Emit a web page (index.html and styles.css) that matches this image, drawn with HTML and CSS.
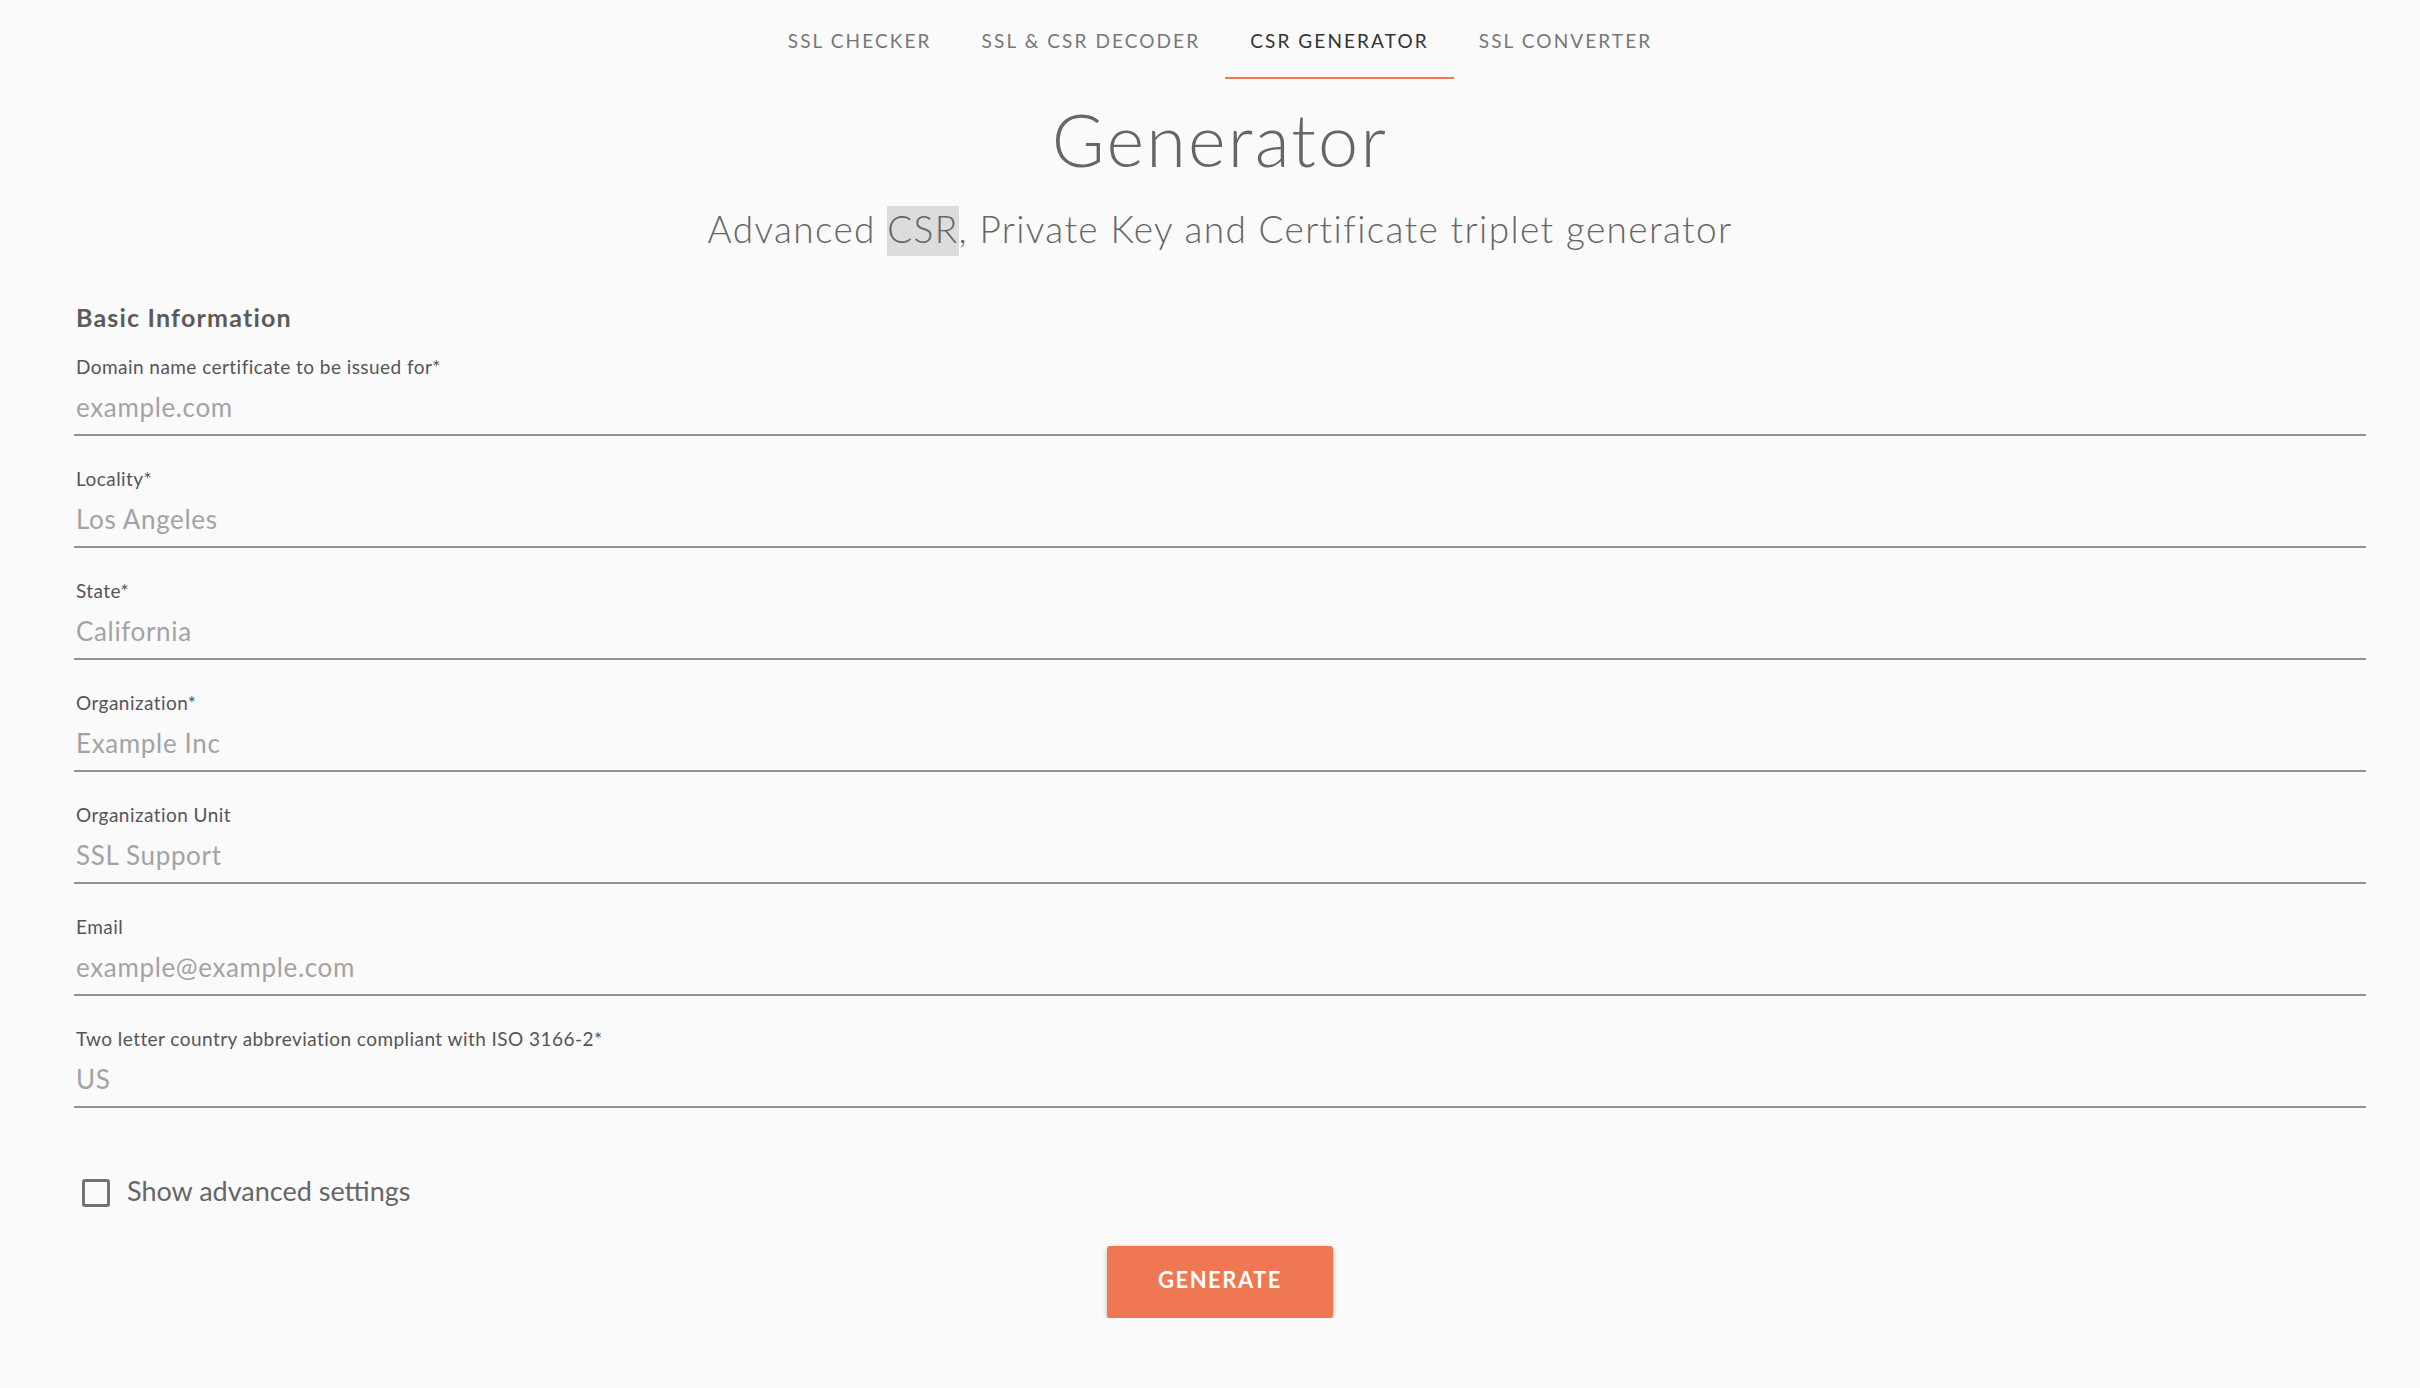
FILE: index.html
```html
<!DOCTYPE html>
<html lang="en">
<head>
<meta charset="utf-8">
<title>CSR Generator</title>
<link rel="stylesheet" href="styles.css">
</head>
<body>
<div class="page">
  <nav class="tabs">
    <a class="tab" href="#">SSL CHECKER</a>
    <a class="tab" href="#">SSL &amp; CSR DECODER</a>
    <a class="tab active" href="#">CSR GENERATOR</a>
    <a class="tab" href="#">SSL CONVERTER</a>
  </nav>
  <h1 class="title">Generator</h1>
  <p class="subtitle">Advanced <span class="hl">CSR</span>, Private Key and Certificate triplet generator</p>
  <form class="form">
    <h2 class="section">Basic Information</h2>
    <label class="field"><span class="label">Domain name certificate to be issued for*</span><input class="input" type="text" placeholder="example.com"></label>
    <label class="field"><span class="label">Locality*</span><input class="input" type="text" placeholder="Los Angeles"></label>
    <label class="field"><span class="label">State*</span><input class="input" type="text" placeholder="California"></label>
    <label class="field"><span class="label">Organization*</span><input class="input" type="text" placeholder="Example Inc"></label>
    <label class="field"><span class="label">Organization Unit</span><input class="input" type="text" placeholder="SSL Support"></label>
    <label class="field"><span class="label">Email</span><input class="input" type="text" placeholder="example@example.com"></label>
    <label class="field"><span class="label">Two letter country abbreviation compliant with ISO 3166-2*</span><input class="input" type="text" placeholder="US"></label>
    <label class="check"><span class="box"></span><span class="check-text">Show advanced settings</span></label>
    <div class="actions"><button class="btn" type="button">GENERATE</button></div>
  </form>
</div>
</body>
</html>
```

FILE: styles.css
```css
* { box-sizing: border-box; }
html, body { margin: 0; padding: 0; background: #fafafa; }
body { font-family: "Lato", "Open Sans", sans-serif; color: #666; }

.page {
  padding: 0 54px 0 74px;
  display: flex;
  flex-direction: column;
}

.tabs {
  display: flex;
  justify-content: center;
  padding-top: 29px;
}
.tab {
  display: block;
  padding: 0 25px 24px;
  font-size: 19px;
  line-height: 24px;
  color: #777;
  text-decoration: none;
  border-bottom: 2px solid transparent;
  letter-spacing: 2.1px;
}
.tab.active { color: #333; border-bottom-color: #ef7752; }

.title {
  margin: 15px 0 0;
  text-align: center;
  font-weight: 300;
  font-size: 72px;
  line-height: 90px;
  letter-spacing: 2.2px;
  color: #666;
}
.subtitle {
  margin: 20px 0 0;
  text-align: center;
  font-weight: 300;
  font-size: 37px;
  line-height: 50px;
  letter-spacing: 1.35px;
  color: #666;
}
.hl { background: #dcdcdc; padding-bottom: 5px; }

.form { display: flex; flex-direction: column; margin-top: 48px; }
.section {
  margin: 0 0 23px 2px;
  font-size: 25px;
  line-height: 30px;
  font-weight: 700;
  letter-spacing: 1.2px;
  color: #5a5a5a;
}
.field { display: flex; flex-direction: column; margin-bottom: 31px; }
.label { font-size: 19px; line-height: 24px; color: #555; margin: 0 0 10px 2px; letter-spacing: 0.45px; }
.input {
  font-family: inherit;
  font-size: 26px;
  line-height: 36px;
  height: 47px;
  padding: 0 0 9px 2px;
  border: 0;
  border-bottom: 2px solid #919191;
  background: transparent;
  color: #555;
  letter-spacing: 0.65px;
  outline: none;
}
.input::placeholder { color: #a3a3a3; opacity: 1; }

.check { display: flex; align-items: center; margin: 40px 0 0 8px; }
.box {
  width: 28px; height: 28px;
  border: 3px solid #727272;
  border-radius: 3px;
  margin-right: 19px;
}
.check-text { font-size: 27px; line-height: 28px; color: #666; margin-top: -4px; margin-left: -2px; }

.actions { display: flex; justify-content: center; margin-top: 39px; }
.btn {
  width: 226px; height: 72px;
  padding: 0 0 5px;
  border: 0; border-radius: 3px;
  background: #ef7752;
  color: #fff;
  font-family: inherit;
  font-weight: 700;
  font-size: 22px;
  letter-spacing: 1.5px;
  box-shadow: 0 2px 5px rgba(0,0,0,0.25);
}
```
